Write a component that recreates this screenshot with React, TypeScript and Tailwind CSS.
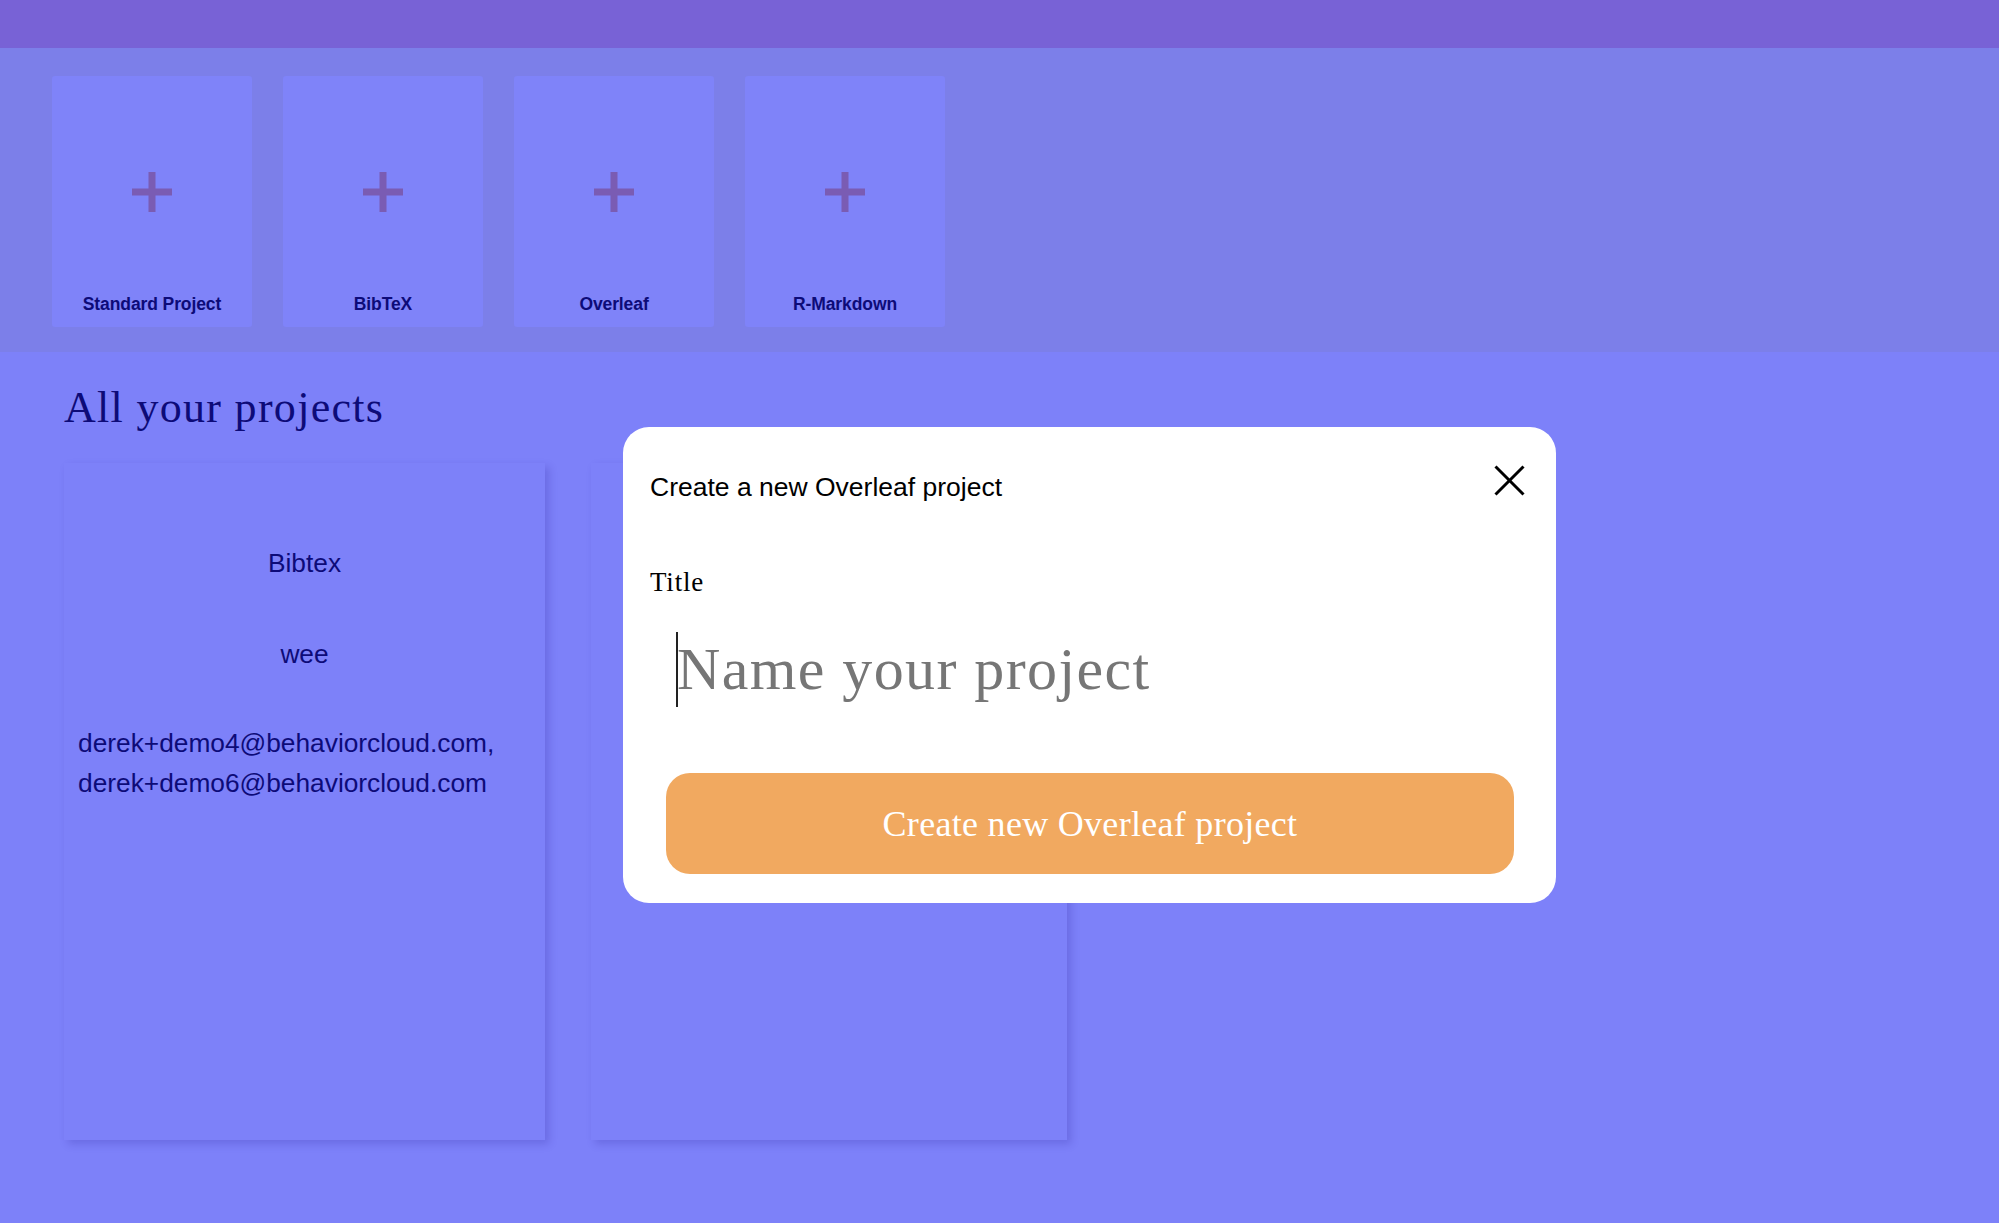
import { useState } from 'react'

const templates = ['Standard Project', 'BibTeX', 'Overleaf', 'R-Markdown']

function PlusMark() {
  return (
    <svg width="40" height="40" viewBox="0 0 40 40" className="block">
      <rect x="16.5" y="0" width="7" height="40" fill="#7a5cb3" />
      <rect x="0" y="16.5" width="40" height="7" fill="#7a5cb3" />
    </svg>
  )
}

function TemplateCard({ label }: { label: string }) {
  return (
    <div className="w-[200px] h-[251px] bg-[#7f83f9] rounded-[3px] flex flex-col items-center pt-[96px] pb-[13px]">
      <PlusMark />
      <div className="mt-auto text-[17.5px] leading-[20px] font-bold text-[#0d0b78] font-['Liberation_Sans',Arial,sans-serif] tracking-[-0.1px]">
        {label}
      </div>
    </div>
  )
}

export default function App() {
  const [title, setTitle] = useState('')

  return (
    <div className="relative min-h-screen w-full bg-[#7d81f9] font-['Liberation_Sans',Arial,sans-serif]">
      <div className="h-[48px] bg-[#7862d6]" />

      <div className="h-[304px] bg-[#7c7fe9] flex gap-[31px] pl-[52px] pt-[28px]">
        {templates.map((t) => (
          <TemplateCard key={t} label={t} />
        ))}
      </div>

      <div className="pl-[64px] pt-[34px] pb-[60px]">
        <h1 className="text-[44px] leading-[44px] text-[#0d0b78] font-['Liberation_Serif','Times_New_Roman',serif] tracking-[1.3px]">
          All your projects
        </h1>

        <div className="flex gap-[46px] mt-[33px]">
          <div className="w-[481px] h-[677px] bg-[#7d81f9] shadow-[4px_4px_8px_rgba(40,30,150,0.22)] pt-[80px] px-[14px] text-[#0d0b78] text-[26.3px] leading-[40px]">
            <div className="text-center">Bibtex</div>
            <div className="text-center mt-[51px]">wee</div>
            <div className="mt-[49px]">
              derek+demo4@behaviorcloud.com,
              <br />
              derek+demo6@behaviorcloud.com
            </div>
          </div>
          <div className="w-[476px] h-[677px] bg-[#7d81f9] shadow-[4px_4px_8px_rgba(40,30,150,0.22)]" />
        </div>
      </div>

      {/* modal */}
      <div className="absolute left-[623px] top-[427px] w-[933px] h-[476px] bg-white rounded-[26px] pt-[44px] px-[27px] pb-[29px]">
        <div className="text-[26.5px] leading-[32px] text-black">Create a new Overleaf project</div>
        <button className="absolute top-[38px] right-[31px] w-[31px] h-[31px] flex items-center justify-center">
          <svg width="31" height="31" viewBox="0 0 31 31">
            <line x1="1.5" y1="1.5" x2="29.5" y2="29.5" stroke="#000" strokeWidth="3" />
            <line x1="29.5" y1="1.5" x2="1.5" y2="29.5" stroke="#000" strokeWidth="3" />
          </svg>
        </button>

        <label className="block mt-[63px] text-[27px] leading-[32px] text-black font-['Liberation_Serif','Times_New_Roman',serif] tracking-[0.8px]">
          Title
        </label>

        <div className="relative mx-[16px] mt-[34px]">
          <input
            type="text"
            value={title}
            onChange={(e) => setTitle(e.target.value)}
            placeholder="Name your project"
            className="w-full h-[75px] pl-[11px] text-[60px] leading-[75px] tracking-[1.4px] outline-none border-0 bg-transparent caret-transparent placeholder:text-[#767676] font-['Liberation_Serif','Times_New_Roman',serif]"
          />
          {title === '' && <span className="absolute left-[10px] top-0 h-[75px] w-[2px] bg-[#222]" />}
        </div>

        <button className="mx-[16px] mt-[66px] w-[848px] h-[101px] rounded-[24px] bg-[#f1a960] text-white text-[36px] font-['Liberation_Serif','Times_New_Roman',serif] tracking-[0.3px]">
          Create new Overleaf project
        </button>
      </div>
    </div>
  )
}
